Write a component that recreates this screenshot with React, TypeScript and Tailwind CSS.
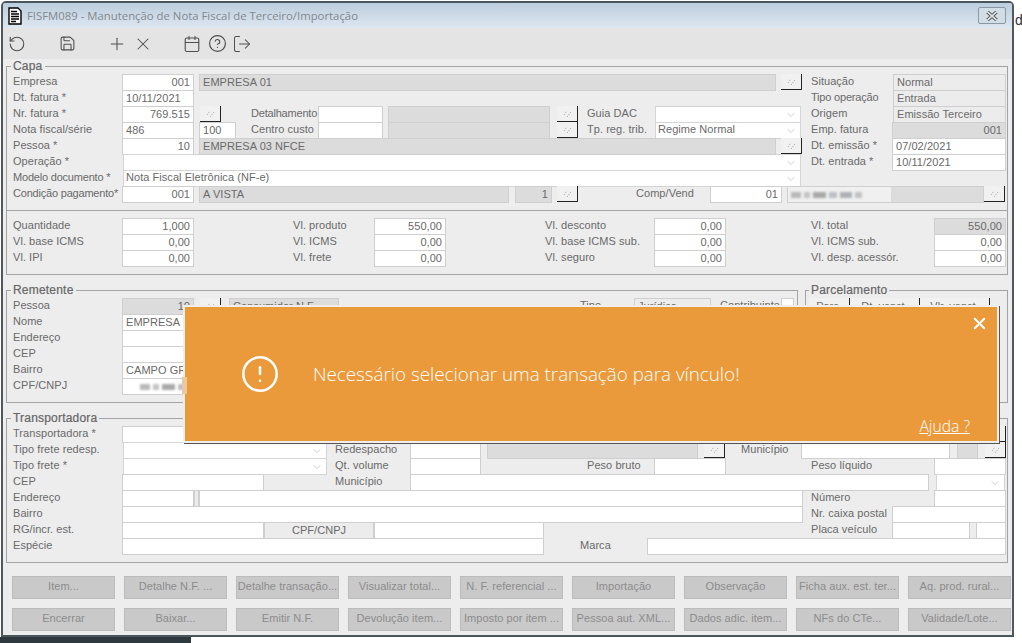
import type { ReactNode } from "react"
import { CircleAlert, CircleHelp, Calendar, ChevronDown, LogOut, Plus, RotateCcw, Save, X } from "lucide-react"

type P = { className?: string; children?: ReactNode }

const Lbl = ({ className = "", children }: P) => (
    <span className={`block h-4 shrink-0 whitespace-nowrap text-[11px] leading-[15px] tracking-[0.05px] text-[#6a6a6a] ${className}`}>{children}</span>
)

// label longo, um pouco mais apertado
const Tight = ({ children }: P) => <span className="tracking-[-0.2px]">{children}</span>

const Base = ({ className = "", children }: P) => (
    <div className={`h-[17px] shrink-0 overflow-hidden whitespace-nowrap border border-[#cfcfcf] text-[11px] leading-[15px] tracking-[0.05px] text-[#6a6a6a] ${className}`}>{children}</div>
)

const Box = ({ className = "", children }: P) => <Base className={`bg-white px-[3px] ${className}`}>{children}</Base>

// campo bloqueado (fundo cinza)
const Gray = ({ className = "", children }: P) => <Base className={`bg-[#dcdcdc] px-[3px] ${className}`}>{children}</Base>

const Read = ({ className = "", children }: P) => <Base className={`bg-[#ececec] px-[3px] ${className}`}>{children}</Base>

const Select = ({ className = "", children }: P) => (
    <div className={`flex h-[17px] shrink-0 items-start justify-between border border-[#d4d4d4] bg-white pl-[2px] pr-[3px] text-[11px] leading-[14px] tracking-[0.05px] text-[#6a6a6a] ${className}`}>
        <span className="-mt-px whitespace-nowrap">{children}</span>
        <ChevronDown className="mt-[2px] h-3 w-3 text-[#b0b0b0]" strokeWidth={1.25} />
    </div>
)

const Lookup = ({ className = "" }: P) => (
    <div className={`flex h-[16px] w-[21px] shrink-0 items-center justify-center border-b border-r border-b-[#222] border-r-[#222] bg-[#f1f1f1] ${className}`}>
        <svg width="9" height="9" viewBox="0 0 9 9" stroke="#b5b5b5" strokeWidth="1" strokeDasharray="1.5 1" fill="none">
            <path d="M1 6 L4 2" />
            <path d="M4 8 L8 3" />
        </svg>
    </div>
)

const Row = ({ className = "", children }: P) => <div className={`flex h-4 items-start ${className}`}>{children}</div>

const Legend = ({ className = "", children }: P) => (
    <legend className={`px-[2px] text-[12px] leading-[14px] tracking-[0.2px] text-[#666] [-webkit-text-stroke:0.2px_#666] ${className}`}>{children}</legend>
)

const Smudge = ({ className = "" }: P) => (
    <div className={`flex h-full items-center gap-[3px] blur-[1px] ${className}`}>
        <div className="h-[6px] w-[10px] bg-[#b9b9b9]" />
        <div className="h-[6px] w-[6px] bg-[#c4c4c4]" />
        <div className="h-[6px] w-[13px] bg-[#a9a9a9]" />
        <div className="h-[6px] w-[8px] bg-[#bcc0c4]" />
        <div className="h-[6px] w-[12px] bg-[#aeb2b6]" />
        <div className="h-[6px] w-[7px] bg-[#c2c2c2]" />
    </div>
)

const row1 = ["Item...", "Detalhe N.F. ...", "Detalhe transação...", "Visualizar total...", "N. F. referencial ...", "Importação", "Observação", "Ficha aux. est. ter...", "Aq. prod. rural..."]
const row2 = ["Encerrar", "Baixar...", "Emitir N.F.", "Devolução item...", "Imposto por item ...", "Pessoa aut. XML...", "Dados adic. item...", "NFs do CTe...", "Validade/Lote..."]

const values = [
    ["Quantidade", "1,000", "Vl. produto", "550,00", "Vl. desconto", "0,00", "Vl. total", "550,00"],
    ["Vl. base ICMS", "0,00", "Vl. ICMS", "0,00", "Vl. base ICMS sub.", "0,00", "Vl. ICMS sub.", "0,00"],
    ["Vl. IPI", "0,00", "Vl. frete", "0,00", "Vl. seguro", "0,00", "Vl. desp. acessór.", "0,00"],
]

function Capa() {
    return (
        <fieldset className="h-[152px] border border-[#a3a3a3] pl-[6px]">
            <Legend className="-ml-[2px]">Capa</Legend>
            <div className="pt-px">
                <Row>
                    <Lbl className="w-[109px]">Empresa</Lbl>
                    <Box className="w-[72px] text-right">001</Box>
                    <Gray className="ml-[5px] w-[577px]">EMPRESA 01</Gray>
                    <Lookup className="ml-[5px]" />
                    <Lbl className="ml-[9px] w-[82px]">Situação</Lbl>
                    <Read className="w-[113px]">Normal</Read>
                </Row>
                <Row>
                    <Lbl className="w-[109px]">Dt. fatura *</Lbl>
                    <Box className="w-[72px]">10/11/2021</Box>
                    <Lbl className="ml-[617px] w-[82px]"><Tight>Tipo operação</Tight></Lbl>
                    <Read className="w-[113px]">Entrada</Read>
                </Row>
                <Row>
                    <Lbl className="w-[109px]">Nr. fatura *</Lbl>
                    <Box className="w-[72px] text-right">769.515</Box>
                    <Lookup className="ml-[6px]" />
                    <Lbl className="ml-[30px] w-[67px]"><Tight>Detalhamento</Tight></Lbl>
                    <Box className="w-[65px]" />
                    <Gray className="ml-[5px] w-[162px]" />
                    <Lookup className="ml-[7px]" />
                    <Lbl className="ml-[9px] w-[68px]">Guia DAC</Lbl>
                    <Select className="w-[146px]" />
                    <Lbl className="ml-[10px] w-[82px]">Origem</Lbl>
                    <Read className="w-[113px]">Emissão Terceiro</Read>
                </Row>
                <Row>
                    <Lbl className="w-[109px]">Nota fiscal/série</Lbl>
                    <Box className="w-[72px]">486</Box>
                    <Box className="ml-[5px] w-[37px]">100</Box>
                    <Lbl className="ml-[15px] w-[67px]">Centro custo</Lbl>
                    <Box className="w-[65px]" />
                    <Gray className="ml-[5px] w-[162px]" />
                    <Lookup className="ml-[7px]" />
                    <Lbl className="ml-[9px] w-[68px]">Tp. reg. trib.</Lbl>
                    <Select className="w-[146px]">Regime Normal</Select>
                    <Lbl className="ml-[10px] w-[81px]">Emp. fatura</Lbl>
                    <Gray className="w-[114px] text-right">001</Gray>
                </Row>
                <Row>
                    <Lbl className="w-[109px]">Pessoa *</Lbl>
                    <Box className="w-[72px] text-right">10</Box>
                    <Gray className="relative ml-[5px] w-[577px]">EMPRESA 03 NFCE</Gray>
                    <Lookup className="ml-[5px]" />
                    <Lbl className="ml-[9px] w-[81px]">Dt. emissão *</Lbl>
                    <Box className="w-[114px]">07/02/2021</Box>
                </Row>
                <Row>
                    <Lbl className="w-[110px]">Operação *</Lbl>
                    <Select className="w-[678px]" />
                    <Lbl className="ml-[10px] w-[81px]">Dt. entrada *</Lbl>
                    <Box className="w-[114px]">10/11/2021</Box>
                </Row>
                <Row>
                    <Lbl className="w-[110px]"><Tight>Modelo documento *</Tight></Lbl>
                    <Select className="w-[678px]">Nota Fiscal Eletrônica (NF-e)</Select>
                </Row>
                <Row>
                    <Lbl className="w-[109px]"><Tight>Condição pagamento*</Tight></Lbl>
                    <Box className="w-[72px] text-right">001</Box>
                    <Gray className="ml-[5px] w-[310px]">A VISTA</Gray>
                    <Gray className="ml-[6px] w-[37px] text-right">1</Gray>
                    <Lookup className="ml-[5px]" />
                    <Lbl className="ml-[58px] w-[74px]">Comp/Vend</Lbl>
                    <Box className="w-[72px] text-right">01</Box>
                    <Base className="ml-[5px] w-[197px] bg-[#dcdcdc]">
                        <div className="h-full w-[103px] bg-[#f0f0f0] pl-[3px]">
                            <Smudge />
                        </div>
                    </Base>
                    <Lookup />
                </Row>
            </div>
        </fieldset>
    )
}

function Valores() {
    return (
        <div className="h-[64px] border-x border-b border-[#a3a3a3] pl-[6px] pt-[7px]">
            {values.map((v, i) => (
                <Row key={i}>
                    <Lbl className="w-[109px]">{v[0]}</Lbl>
                    <Box className="w-[72px] text-right">{v[1]}</Box>
                    <Lbl className="ml-[99px] w-[81px]">{v[2]}</Lbl>
                    <Box className="w-[72px] text-right">{v[3]}</Box>
                    <Lbl className="ml-[99px] w-[109px]">{v[4]}</Lbl>
                    <Box className="w-[72px] text-right">{v[5]}</Box>
                    <Lbl className="ml-[85px] w-[123px]">{v[6]}</Lbl>
                    {i === 0 ? <Gray className="w-[72px] text-right">{v[7]}</Gray> : <Box className="w-[72px] text-right">{v[7]}</Box>}
                </Row>
            ))}
        </div>
    )
}

function Remetente() {
    return (
        <div className="mt-2 flex gap-[7px]">
            <fieldset className="h-[120px] w-[792px] shrink-0 border border-[#a3a3a3] pl-[6px]">
                <Legend className="-ml-[2px]">Remetente</Legend>
                <div className="pt-px">
                    <Row>
                        <Lbl className="w-[109px]">Pessoa</Lbl>
                        <Gray className="w-[72px] text-right">10</Gray>
                        <Lookup className="ml-[6px]" />
                        <Gray className="ml-[8px] w-[110px]">Consumidor N.F.</Gray>
                        <Lbl className="ml-[241px] w-[54px]">Tipo</Lbl>
                        <Read className="w-[77px]">Jurídica</Read>
                        <Lbl className="ml-[9px] w-[61px]">Contribuinte</Lbl>
                        <Box className="h-[13px] w-[13px]" />
                    </Row>
                    <Row>
                        <Lbl className="w-[109px]">Nome</Lbl>
                        <Box className="w-[660px]">EMPRESA 03 NFCE</Box>
                    </Row>
                    <Row>
                        <Lbl className="w-[109px]">Endereço</Lbl>
                        <Box className="w-[660px]" />
                    </Row>
                    <Row>
                        <Lbl className="w-[109px]">CEP</Lbl>
                        <Box className="w-[142px]" />
                    </Row>
                    <Row>
                        <Lbl className="w-[109px]">Bairro</Lbl>
                        <Box className="w-[660px]">CAMPO GRANDE</Box>
                    </Row>
                    <Row>
                        <Lbl className="w-[109px]">CPF/CNPJ</Lbl>
                        <Box className="w-[142px]">
                            <Smudge className="pl-[14px]" />
                        </Box>
                    </Row>
                </div>
            </fieldset>
            <fieldset className="h-[120px] w-[203px] shrink-0 border border-[#a3a3a3] pl-[3px]">
                <Legend>Parcelamento</Legend>
                <div className="flex pt-px text-center text-[11px] leading-[16px] text-[#6a6a6a]">
                    <div className="w-[41px] border-r border-r-[#222] bg-[#f1f1f1]">Parc.</div>
                    <div className="w-[70px] border-r border-r-[#222] bg-[#f1f1f1]">Dt. venct.</div>
                    <div className="w-[70px] border-r border-r-[#222] bg-[#f1f1f1]">Vlr. venct.</div>
                </div>
            </fieldset>
        </div>
    )
}

function Transportadora() {
    return (
        <fieldset className="mt-2 h-[152px] border border-[#a3a3a3] pl-[6px]">
            <Legend className="-ml-[2px]">Transportadora</Legend>
            <div className="pt-px">
                <Row>
                    <Lbl className="w-[109px]">Transportadora *</Lbl>
                    <Box className="w-[72px]" />
                    <Gray className="ml-[5px] w-[780px]" />
                    <Lookup className="ml-[6px]" />
                </Row>
                <Row>
                    <Lbl className="w-[110px]">Tipo frete redesp.</Lbl>
                    <Select className="w-[204px]" />
                    <Lbl className="ml-[8px] w-[75px]">Redespacho</Lbl>
                    <Box className="w-[71px]" />
                    <Gray className="ml-[6px] w-[211px]" />
                    <Lookup className="ml-[6px]" />
                    <Lbl className="ml-[16px] w-[60px]">Município</Lbl>
                    <Box className="w-[149px]" />
                    <Gray className="ml-[7px] w-[21px]" />
                    <Lookup className="ml-[7px]" />
                </Row>
                <Row>
                    <Lbl className="w-[110px]">Tipo frete *</Lbl>
                    <Select className="w-[204px]" />
                    <Lbl className="ml-[8px] w-[75px]">Qt. volume</Lbl>
                    <Box className="w-[71px]" />
                    <Lbl className="ml-[106px] w-[67px]">Peso bruto</Lbl>
                    <Box className="w-[72px]" />
                    <Lbl className="ml-[85px] w-[123px]">Peso líquido</Lbl>
                    <Box className="w-[72px]" />
                </Row>
                <Row>
                    <Lbl className="w-[109px]">CEP</Lbl>
                    <Box className="w-[142px]" />
                    <Lbl className="ml-[71px] w-[75px]">Município</Lbl>
                    <Box className="w-[519px]" />
                    <Select className="ml-[7px] w-[69px]" />
                </Row>
                <Row>
                    <Lbl className="w-[109px]">Endereço</Lbl>
                    <Box className="w-[72px]" />
                    <Base className="w-[5px] bg-[#ececec]" />
                    <Box className="w-[604px]" />
                    <Lbl className="ml-[8px] w-[123px]">Número</Lbl>
                    <Box className="w-[72px]" />
                </Row>
                <Row>
                    <Lbl className="w-[109px]">Bairro</Lbl>
                    <Box className="w-[681px]" />
                    <Lbl className="ml-[8px] w-[81px]">Nr. caixa postal</Lbl>
                    <Box className="w-[114px]" />
                </Row>
                <Row>
                    <Lbl className="w-[109px]">RG/incr. est.</Lbl>
                    <Box className="w-[142px]" />
                    <Read className="w-[110px] text-center">CPF/CNPJ</Read>
                    <Box className="w-[170px]" />
                    <Lbl className="ml-[267px] w-[81px]">Placa veículo</Lbl>
                    <Box className="w-[78px]" />
                    <Box className="ml-[6px] w-[30px]" />
                </Row>
                <Row>
                    <Lbl className="w-[109px]">Espécie</Lbl>
                    <Box className="w-[422px]" />
                    <Lbl className="ml-[36px] w-[67px]">Marca</Lbl>
                    <Box className="w-[359px]" />
                </Row>
            </div>
        </fieldset>
    )
}

export default function App() {
    return (
        <div className="relative h-[643px] w-[1022px] overflow-hidden bg-white font-['Liberation_Sans',sans-serif]">
            <div className="ml-px mt-px h-[636px] w-[1013px] overflow-hidden rounded-t-[5px] border-x-2 border-y-2 border-x-[#50585e] border-y-[#4b555c] bg-[#ededed]">
                {/* barra de titulo */}
                <div className="flex h-[25px] items-center bg-gradient-to-b from-[#bccddd] to-[#dde7f1] pl-[5px]">
                    <svg width="14" height="18" viewBox="0 0 14 18" className="shrink-0">
                        <path d="M1 1 H10 L13 4 V17 H1 Z" fill="#fff" stroke="#000" strokeWidth="1.4" />
                        <path d="M3 4.5 H9 M3 7 H11 M3 9.5 H11 M3 12 H11 M3 14.5 H8" stroke="#000" strokeWidth="1.5" />
                    </svg>
                    <span className="ml-[5px] whitespace-nowrap font-['Open_Sans',sans-serif] text-[11.35px] text-[#83888d]">FISFM089 - Manutenção de Nota Fiscal de Terceiro/Importação</span>
                    <div className="ml-auto mr-[6px] flex h-[17px] w-[28px] items-center justify-center rounded-[2px] border border-[#8b98a3] bg-[#d3dde6]">
                        <svg width="14" height="12" viewBox="0 0 14 12" fill="none">
                            <path d="M2.5 2 L11.5 10 M11.5 2 L2.5 10" stroke="#55595d" strokeWidth="3.6" />
                            <path d="M2.5 2 L11.5 10 M11.5 2 L2.5 10" stroke="#e8edf1" strokeWidth="1.6" />
                        </svg>
                    </div>
                </div>

                {/* toolbar */}
                <div className="flex h-[31px] items-center bg-[#e4e4e4] pl-[5px] text-[#4f4f4f]">
                    <RotateCcw className="h-[18px] w-[18px]" strokeWidth={1.5} />
                    <Save className="ml-[33px] h-[17px] w-[17px]" strokeWidth={1.5} />
                    <Plus className="ml-[31px] h-[20px] w-[20px]" strokeWidth={1.25} />
                    <X className="ml-[6px] h-[20px] w-[20px]" strokeWidth={1.25} />
                    <Calendar className="ml-[30px] h-[18px] w-[18px]" strokeWidth={1.5} />
                    <CircleHelp className="ml-[7px] h-[19px] w-[19px]" strokeWidth={1.5} />
                    <LogOut className="ml-[5px] h-[20px] w-[20px]" strokeWidth={1.25} />
                </div>

                <div className="pl-[3px] pr-[4px]">
                    <Capa />
                    <Valores />
                    <Remetente />
                    <Transportadora />

                    <div className="ml-[6px] mt-[13px] flex gap-[9px]">
                        {row1.map((b) => (
                            <div key={b} className="h-[23px] w-[103px] shrink-0 whitespace-nowrap border border-[#bcbcbc] bg-[#c9c9c9] text-center text-[11px] leading-[19px] tracking-[0.05px] text-[#8c8c8c]">{b}</div>
                        ))}
                    </div>
                    <div className="ml-[6px] mt-[9px] flex gap-[9px]">
                        {row2.map((b) => (
                            <div key={b} className="h-[23px] w-[103px] shrink-0 whitespace-nowrap border border-[#bcbcbc] bg-[#c9c9c9] text-center text-[11px] leading-[19px] tracking-[0.05px] text-[#8c8c8c]">{b}</div>
                        ))}
                    </div>
                </div>
            </div>

            {/* faixa da janela de tras */}
            <div className="h-[6px] w-[191px] bg-[#2d393e]" />
            <span className="absolute left-[1015px] top-[12px] text-[14px] leading-4 text-[#333]">do</span>

            {/* toast */}
            <div className="absolute left-[183px] top-[305px] flex h-[138px] w-[816px] flex-col border-2 border-[#f0eeea] bg-[#ea9a3b] font-['Open_Sans',sans-serif] text-white shadow-[1px_1px_0_#555]">
                <div className="flex justify-end pr-[8px] pt-[7px]">
                    <X className="h-[19px] w-[19px]" strokeWidth={2.5} />
                </div>
                <div className="mt-[21px] flex items-center pl-[55px]">
                    <CircleAlert className="h-[40px] w-[40px]" strokeWidth={1.5} />
                    <span className="ml-[33px] whitespace-nowrap text-[18.8px] font-light">Necessário selecionar uma transação para vínculo!</span>
                </div>
                <div className="mt-auto flex justify-end pb-[2px] pr-[27px]">
                    <span className="text-[15.7px] font-light underline">Ajuda ?</span>
                </div>
            </div>
            <div className="absolute left-[182px] top-[377px] h-[17px] w-[5px] bg-[#e8c9a0]" />
        </div>
    )
}
